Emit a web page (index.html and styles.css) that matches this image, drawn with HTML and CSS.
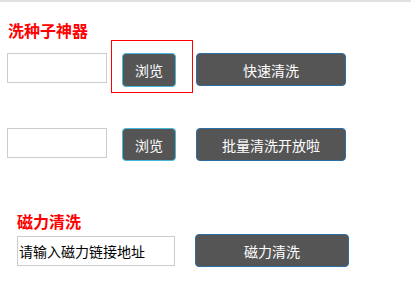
FILE: index.html
```html
<!DOCTYPE html>
<html>
<head>
<meta charset="utf-8">
<link rel="stylesheet" href="styles.css">
</head>
<body>
<div class="page">
  <div class="title t1">洗种子神器</div>
  <div class="row r1">
    <input class="field" type="text">
    <div class="hl">
      <button class="btn small">浏览</button>
    </div>
    <button class="btn big b1">快速清洗</button>
  </div>
  <div class="row r2">
    <input class="field" type="text">
    <button class="btn small s2">浏览</button>
    <button class="btn big b2">批量清洗开放啦</button>
  </div>
  <div class="title t2">磁力清洗</div>
  <div class="row r3">
    <input class="field wide" type="text" value="请输入磁力链接地址">
    <button class="btn big b3">磁力清洗</button>
  </div>
</div>
</body>
</html>
```
FILE: styles.css
```css
html, body {
  margin: 0;
  padding: 0;
  background: #fff;
}
.page {
  border-top: 2px solid #e2e2e2;
  height: 286px;
  font-family: "Noto Sans CJK SC", "Noto Sans", sans-serif;
}
.title {
  color: #ff0000;
  font-weight: bold;
  font-size: 16px;
  line-height: 20px;
  height: 20px;
}
.t1 {
  margin-top: 18px;
  padding-left: 8px;
}
.t2 {
  margin-top: 50px;
  padding-left: 17px;
}
.row {
  display: flex;
  align-items: flex-start;
  padding-left: 7px;
}
.r2 {
  margin-top: 35px;
}
.r3 {
  margin-top: 3px;
  padding-left: 17px;
}
.field {
  box-sizing: border-box;
  width: 100px;
  height: 30px;
  margin: 13px 0 0 0;
  border: 1px solid #cccccc;
  padding: 0 1px;
  font-family: "Noto Sans CJK SC", sans-serif;
  font-size: 14px;
  color: #000;
  outline: none;
}
.r2 .field {
  margin-top: 0;
}
.r3 .field {
  margin-top: 2px;
}
.wide {
  width: 158px;
}
.hl {
  border: 1px solid #ff0000;
  padding: 12px 16px 5px 10px;
  margin-left: 4px;
}
.btn {
  box-sizing: border-box;
  height: 33px;
  background: #555555;
  color: #ffffff;
  border-radius: 4px;
  font-family: "Noto Sans CJK SC", sans-serif;
  font-size: 14px;
  padding: 0;
  margin: 0;
  cursor: pointer;
}
.small {
  width: 54px;
  border: 1px solid #46b8da;
}
.hl .small {
  height: 34px;
}
.big {
  width: 150px;
  border: 1px solid #2e6da4;
}
.b1 {
  margin: 13px 0 0 3px;
}
.s2 {
  margin-left: 15px;
}
.b2 {
  margin-left: 20px;
}
.b3 {
  width: 154px;
  margin-left: 20px;
}
```
